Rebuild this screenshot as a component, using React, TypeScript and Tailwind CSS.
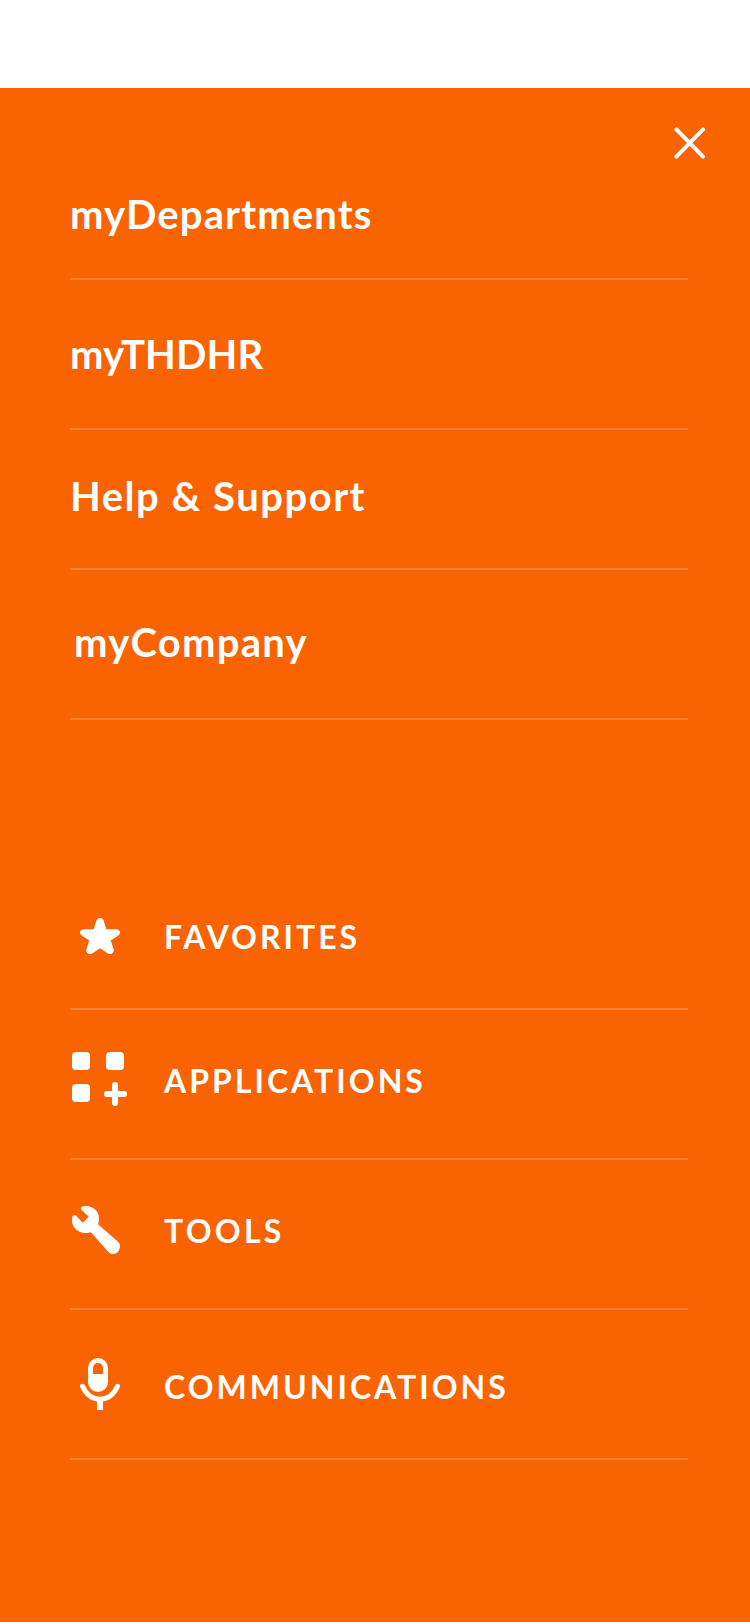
import type { ReactNode } from "react";

interface NavItem {
  label: string;
  // row height plus where its label sits
  row: string;
  text: string;
}

interface ShortcutItem extends NavItem {
  icon: ReactNode;
  iconBox: string;
}

function CloseIcon() {
  return (
    <svg viewBox="0 0 32 32" className="h-8 w-8" fill="none" stroke="currentColor" strokeWidth="4" strokeLinecap="round">
      <path d="M2.4 2.4 29 29.6M29 2.4 2.4 29.6" />
    </svg>
  );
}

function StarIcon() {
  return (
    <svg viewBox="0 0 40 36" className="h-9 w-10" fill="currentColor">
      <path d="M16.2 3.2Q17.3 0 20 0T23.8 3.2L26.4 11.3 36.6 11.3Q39.4 11.5 40 14 40.2 16.2 38 17.8L30.8 22.6 33.6 31.2Q34.2 33.8 32.2 35.4 30 36.6 27.8 35.4L20 30.2 12.2 35.4Q10 36.6 7.8 35.4 5.8 33.8 6.4 31.2L9.2 22.6 2 17.8Q-.2 16.2 0 14 .6 11.5 3.4 11.3L13.6 11.3Z" />
    </svg>
  );
}

function AppsIcon() {
  return (
    <svg viewBox="0 0 55 54" className="h-[54px] w-[55px]" fill="currentColor">
      <rect width="18" height="18" rx="4" />
      <rect x="34" width="18" height="18" rx="4" />
      <rect y="32" width="18" height="18" rx="4" />
      <path d="M43 33V51M35 42H52" stroke="currentColor" strokeWidth="6" strokeLinecap="round" />
    </svg>
  );
}

function WrenchIcon() {
  return (
    <svg viewBox="36 48 144 144" className="h-12 w-12" fill="currentColor">
      <path d="M37 80Q39 73 47 76L68 98 86 80 64 59Q61 52 67 49 77 47 86 49C106 53 117 68 117 86Q117 95 114 103L174 155Q181 162 180 170C178 183 171 191 160 192Q151 193 145 186L93 127Q84 130 73 129C51 127 36 111 36 91Z" />
    </svg>
  );
}

function MicIcon() {
  return (
    <svg viewBox="60 39 120 156" className="h-[52px] w-10" fill="currentColor">
      <path
        fillRule="evenodd"
        d="M84 69a30 30 0 0 1 60 0v42a30 30 0 0 1-60 0ZM99 87h30V69a15 15 0 0 0-30 0Z"
      />
      <path d="M67.5 124C78 149 98 162.500 120 162.500S162 149 172.500 124" fill="none" stroke="currentColor" strokeWidth="15" strokeLinecap="round" />
      <path d="M111 163h18v32h-18z" />
    </svg>
  );
}

const links: NavItem[] = [
  { label: "myDepartments", row: "h-[82px] pb-[41px]", text: "tracking-[1.15px]" },
  { label: "myTHDHR", row: "h-[150px] pb-[51px]", text: "tracking-[0.1px]" },
  { label: "Help & Support", row: "h-[140px] pb-[49px]", text: "tracking-[1.5px]" },
  { label: "myCompany", row: "h-[150px] pb-[53px] pl-1", text: "tracking-[1.25px]" },
];

const shortcuts: ShortcutItem[] = [
  { label: "FAVORITES", icon: <StarIcon />, iconBox: "pl-2.5 pb-[54px]", row: "h-[120px]", text: "pb-[52px] tracking-[3px]" },
  { label: "APPLICATIONS", icon: <AppsIcon />, iconBox: "pl-0.5 pb-[52px]", row: "h-[150px]", text: "pb-[58px] tracking-[3px]" },
  { label: "TOOLS", icon: <WrenchIcon />, iconBox: "pl-0.5 pb-[54px]", row: "h-[150px]", text: "pb-[58px] tracking-[3.25px]" },
  { label: "COMMUNICATIONS", icon: <MicIcon />, iconBox: "pl-2.5 pb-12", row: "h-[150px]", text: "pb-[52px] tracking-[3px]" },
];

export default function App() {
  return (
    <div className="h-[1624px] w-[750px] overflow-hidden bg-white pt-[88px] font-['Lato',sans-serif] text-white">
      <div className="h-[1534px] bg-[#f96302] pr-[62px] pl-[70px]">
        <div className="-mr-[18px] flex h-[110px] justify-end pt-[39px]">
          <button aria-label="Close" className="h-8 w-8">
            <CloseIcon />
          </button>
        </div>

        {/* Main links */}
        <nav>
          {links.map((item) => (
            <a key={item.label} className={`flex items-end border-b-2 border-white/20 ${item.row}`}>
              <span className={`text-[40px] leading-[48px] font-bold whitespace-nowrap -mb-[1px] ${item.text}`}>{item.label}</span>
            </a>
          ))}
        </nav>

        {/* Shortcuts */}
        <nav className="mt-[170px]">
          {shortcuts.map((item) => (
            <a key={item.label} className={`flex items-end border-b-2 border-white/20 ${item.row}`}>
              <span className={`w-[94px] shrink-0 ${item.iconBox}`}>{item.icon}</span>
              <span className={`text-[32px] leading-[38px] font-bold whitespace-nowrap ${item.text}`}>{item.label}</span>
            </a>
          ))}
        </nav>
      </div>
    </div>
  );
}
